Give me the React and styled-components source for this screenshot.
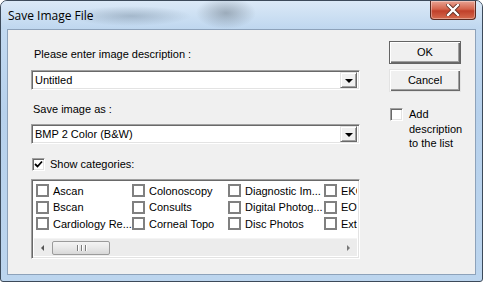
import React from 'react'
import styled, { createGlobalStyle } from 'styled-components'

const Global = createGlobalStyle`
  html, body { margin: 0; padding: 0; background: #fff; }
  body { font-family: "Liberation Sans", Arial, sans-serif; font-size: 11px; color: #000; }
`

const Window = styled.div`
  width: 483px;
  height: 282px;
  box-sizing: border-box;
  border: 1px solid #3c4a5a;
  border-radius: 7px 7px 3px 3px;
  background: linear-gradient(180deg, #c6dcf2 0%, #b7d1ec 40%, #bcd5ee 100%);
  display: flex;
  flex-direction: column;
  overflow: hidden;
`

const TitleBar = styled.div`
  height: 28px;
  display: flex;
  align-items: flex-start;
  justify-content: space-between;
  padding-left: 7px;
  background:
    radial-gradient(ellipse 60px 10px at 130px 15px, rgba(90,110,130,0.35), transparent),
    radial-gradient(ellipse 30px 16px at 225px 12px, rgba(60,70,80,0.35), transparent),
    linear-gradient(180deg, #dbe9f7 0%, #bfd7ef 100%);
`

const Title = styled.span`
  font-family: "Open Sans", "Noto Sans", sans-serif;
  font-size: 12px;
  line-height: 12px;
  margin-top: 9px;
  color: #000;
`

const CloseButton = styled.div`
  width: 44px;
  height: 18px;
  margin-right: 6px;
  border: 1px solid #5a2a20;
  border-top: none;
  border-radius: 0 0 4px 4px;
  background: linear-gradient(180deg, #e8a393 0%, #d4644c 45%, #c0402a 55%, #d56a4e 100%);
  display: flex;
  align-items: center;
  justify-content: center;
  box-shadow: inset 0 0 0 1px rgba(255,255,255,0.35);
`

const Frame = styled.div`
  flex: 1;
  padding: 0 6px 6px 6px;
  display: flex;
`

const Client = styled.div`
  flex: 1;
  background: #f0f0f0;
  border: 1px solid #8da2ba;
  display: flex;
  padding: 11px 0 0 23px;
`

const LeftCol = styled.div`
  width: 329px;
  display: flex;
  flex-direction: column;
`

const RightCol = styled.div`
  margin-left: 29px;
  display: flex;
  flex-direction: column;
  gap: 5px;
`

const Label = styled.div`
  height: 13px;
  line-height: 13px;
  margin: ${p => p.$top}px 0 0 ${p => p.$left}px;
`

const Combo = styled.div`
  height: 20px;
  margin-top: ${p => p.$top}px;
  box-sizing: border-box;
  background: #fff;
  border-top: 1px solid #a0a0a0;
  border-left: 1px solid #a0a0a0;
  border-right: 1px solid #fff;
  border-bottom: 1px solid #fff;
  box-shadow: inset 1px 1px 0 #696969, inset -1px -1px 0 #e3e3e3;
  display: flex;
  align-items: center;
  padding: 2px;
`

const ComboText = styled.span`
  flex: 1;
  padding-left: 1px;
  line-height: 14px;
`

const DropButton = styled.div`
  width: 17px;
  height: 16px;
  box-sizing: border-box;
  background: #f0f0f0;
  border-top: 1px solid #e3e3e3;
  border-left: 1px solid #e3e3e3;
  border-right: 1px solid #696969;
  border-bottom: 1px solid #696969;
  box-shadow: inset 1px 1px 0 #fff, inset -1px -1px 0 #a0a0a0;
  display: flex;
  align-items: center;
  justify-content: center;
`

const Arrow = styled.div`
  width: 0;
  height: 0;
  border-left: 4px solid transparent;
  border-right: 4px solid transparent;
  border-top: 4px solid #000;
  margin-top: 1px;
`

const CheckRow = styled.label`
  display: flex;
  align-items: flex-start;
  gap: ${p => p.$gap || 4}px;
  margin-top: ${p => p.$top || 0}px;
  margin-left: ${p => p.$left || 0}px;
`

const SunkenBox = styled.span`
  width: 13px;
  height: 13px;
  flex: none;
  box-sizing: border-box;
  background: #fff;
  border-top: 1px solid #a0a0a0;
  border-left: 1px solid #a0a0a0;
  border-right: 1px solid #fff;
  border-bottom: 1px solid #fff;
  box-shadow: inset 1px 1px 0 #696969, inset -1px -1px 0 #e3e3e3;
  display: flex;
  align-items: center;
  justify-content: center;
`

const FlatBox = styled.span`
  width: 13px;
  height: 13px;
  flex: none;
  box-sizing: border-box;
  border: 2px solid #808080;
  background: #fff;
`

const ListBox = styled.div`
  margin-top: 8px;
  height: 80px;
  box-sizing: border-box;
  background: #fff;
  border-top: 1px solid #a0a0a0;
  border-left: 1px solid #a0a0a0;
  border-right: 1px solid #fff;
  border-bottom: 1px solid #fff;
  box-shadow: inset 1px 1px 0 #696969, inset -1px -1px 0 #e3e3e3;
  padding: 2px;
  display: flex;
  flex-direction: column;
  overflow: hidden;
`

const Items = styled.div`
  flex: 1;
  display: grid;
  grid-template-columns: repeat(4, 96px);
  grid-auto-flow: column;
  grid-template-rows: repeat(3, 16.5px);
  padding: 1px 0 0 2px;
  overflow: hidden;
`

const Item = styled.div`
  display: flex;
  align-items: center;
  gap: 4px;
  white-space: nowrap;
  overflow: hidden;
  height: 13px;
  margin-top: 1px;
`

const ScrollBar = styled.div`
  height: 17px;
  background: #ececec;
  border-top: 1px solid #f4f4f4;
  display: flex;
  align-items: center;
`

const ScrollArrow = styled.div`
  width: 17px;
  height: 16px;
  display: flex;
  align-items: center;
  justify-content: center;
`

const TriangleLeft = styled.div`
  width: 0;
  height: 0;
  border-top: 3px solid transparent;
  border-bottom: 3px solid transparent;
  border-right: 3px solid #555;
`

const TriangleRight = styled.div`
  width: 0;
  height: 0;
  border-top: 3px solid transparent;
  border-bottom: 3px solid transparent;
  border-left: 3px solid #777;
`

const Thumb = styled.div`
  width: 58px;
  height: 14px;
  margin-left: 1px;
  box-sizing: border-box;
  border: 1px solid #9b9b9b;
  border-radius: 2px;
  background: linear-gradient(180deg, #f4f4f4 0%, #e8e8e8 50%, #d8d8d8 100%);
  display: flex;
  align-items: center;
  justify-content: center;
  gap: 1px;
`

const Grip = styled.span`
  width: 1px;
  height: 6px;
  background: #7c7c7c;
  box-shadow: 1px 0 0 #fff;
  margin: 0 1px;
`

const Track = styled.div`
  flex: 1;
`

const Button = styled.div`
  width: 72px;
  height: ${p => p.$h}px;
  box-sizing: border-box;
  background: #f0f0f0;
  border: 1px solid ${p => (p.$default ? '#646464' : '#e3e3e3')};
  box-shadow: inset 1px 1px 0 #fff, inset -1px -1px 0 #696969, inset -2px -2px 0 #a0a0a0;
  display: flex;
  align-items: center;
  justify-content: center;
  padding-bottom: 1px;
`

const AddText = styled.span`
  line-height: 14.5px;
  margin-top: -1px;
`

const categories = [
  'Ascan', 'Bscan', 'Cardiology Re...',
  'Colonoscopy', 'Consults', 'Corneal Topo',
  'Diagnostic Im...', 'Digital Photog...', 'Disc Photos',
  'EKG', 'EOB', 'External'
]

export default function App () {
  return (
    <>
      <Global />
      <Window>
        <TitleBar>
          <Title>Save Image File</Title>
          <CloseButton>
            <svg width='14' height='12' viewBox='0 0 14 12'>
              <path d='M2 1 L12 11 M12 1 L2 11' stroke='#5a2a20' strokeWidth='4' strokeLinecap='square' />
              <path d='M2 1 L12 11 M12 1 L2 11' stroke='#fff' strokeWidth='2.4' strokeLinecap='square' />
            </svg>
          </CloseButton>
        </TitleBar>
        <Frame>
          <Client>
            <LeftCol>
              <Label $top={7} $left={3}>Please enter image description :</Label>
              <Combo $top={9}>
                <ComboText>Untitled</ComboText>
                <DropButton><Arrow /></DropButton>
              </Combo>
              <Label $top={13} $left={2}>Save image as :</Label>
              <Combo $top={8}>
                <ComboText>BMP 2 Color (B&amp;W)</ComboText>
                <DropButton><Arrow /></DropButton>
              </Combo>
              <CheckRow $top={14} $left={1} $gap={5}>
                <SunkenBox>
                  <svg width='9' height='9' viewBox='0 0 9 9'>
                    <path d='M1 4 L3.5 6.5 L8 1.5' stroke='#000' strokeWidth='1.8' fill='none' />
                  </svg>
                </SunkenBox>
                <span>Show categories:</span>
              </CheckRow>
              <ListBox>
                <Items>
                  {categories.map(c => (
                    <Item key={c}><FlatBox /><span>{c}</span></Item>
                  ))}
                </Items>
                <ScrollBar>
                  <ScrollArrow><TriangleLeft /></ScrollArrow>
                  <Thumb><Grip /><Grip /><Grip /></Thumb>
                  <Track />
                  <ScrollArrow><TriangleRight /></ScrollArrow>
                </ScrollBar>
              </ListBox>
            </LeftCol>
            <RightCol>
              <Button $default $h={23}>OK</Button>
              <Button $h={23}>Cancel</Button>
              <CheckRow $top={11} $left={1} $gap={6}>
                <SunkenBox />
                <AddText>Add<br />description<br />to the list</AddText>
              </CheckRow>
            </RightCol>
          </Client>
        </Frame>
      </Window>
    </>
  )
}
